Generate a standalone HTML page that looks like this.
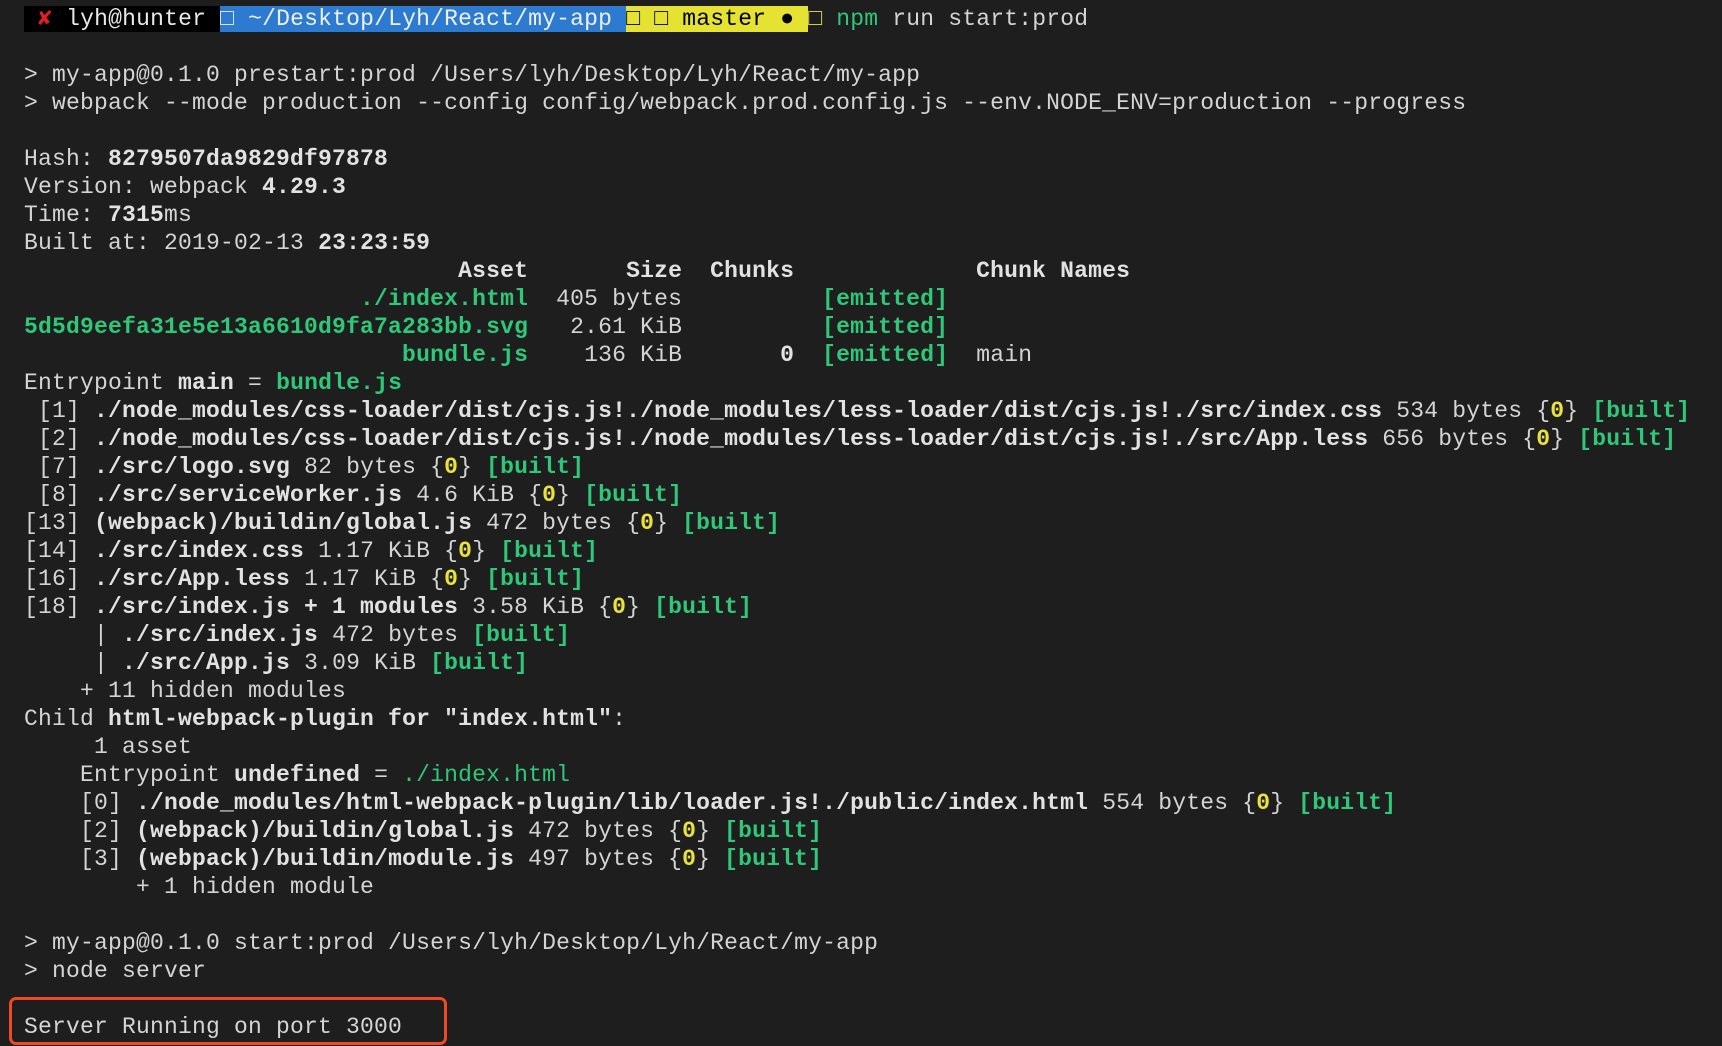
<!DOCTYPE html>
<html><head><meta charset="utf-8"><style>
html,body{margin:0;padding:0;background:#1e1e1e;width:1722px;height:1046px;overflow:hidden}
pre{margin:0;position:absolute;left:24px;top:5px;font-family:"Liberation Mono","DejaVu Sans Mono",monospace;font-size:23px;letter-spacing:0.2px;line-height:28px;color:#d4d4d4;white-space:pre}
b{font-weight:bold;color:#e2e2e2}
.g{color:#2fc878;font-weight:bold}
.gn{color:#2fc878}
.y{color:#e8e23a;font-weight:bold}
.pb{background:#000;color:#e8e8e8}
.bl{background:#2c7bd0;color:#f0f0f0}
.yl{background:#e6e232;color:#000}
.r{color:#e02020;font-weight:bold}
.box{position:absolute;left:9px;top:997px;width:432px;height:42px;border:3px solid #f04a23;border-radius:7px}
</style></head><body>
<pre><span class="pb"> <span class="r">✘</span> lyh@hunter </span><span class="bl">□ ~/Desktop/Lyh/React/my-app </span><span class="yl">□ □ master ● </span><span style="color:#e6e232">□</span> <span class="gn">npm</span> run start:prod

&gt; my-app@0.1.0 prestart:prod /Users/lyh/Desktop/Lyh/React/my-app
&gt; webpack --mode production --config config/webpack.prod.config.js --env.NODE_ENV=production --progress

Hash: <b>8279507da9829df97878</b>
Version: webpack <b>4.29.3</b>
Time: <b>7315</b>ms
Built at: 2019-02-13 <b>23:23:59</b>
<b>                               Asset       Size  Chunks             Chunk Names</b>
<span class="g">                        ./index.html</span>  405 bytes          <span class="g">[emitted]</span>
<span class="g">5d5d9eefa31e5e13a6610d9fa7a283bb.svg</span>   2.61 KiB          <span class="g">[emitted]</span>
<span class="g">                           bundle.js</span>    136 KiB       <b>0</b>  <span class="g">[emitted]</span>  main
Entrypoint <b>main</b> = <span class="g">bundle.js</span>
 [1] <b>./node_modules/css-loader/dist/cjs.js!./node_modules/less-loader/dist/cjs.js!./src/index.css</b> 534 bytes {<span class="y">0</span>} <span class="g">[built]</span>
 [2] <b>./node_modules/css-loader/dist/cjs.js!./node_modules/less-loader/dist/cjs.js!./src/App.less</b> 656 bytes {<span class="y">0</span>} <span class="g">[built]</span>
 [7] <b>./src/logo.svg</b> 82 bytes {<span class="y">0</span>} <span class="g">[built]</span>
 [8] <b>./src/serviceWorker.js</b> 4.6 KiB {<span class="y">0</span>} <span class="g">[built]</span>
[13] <b>(webpack)/buildin/global.js</b> 472 bytes {<span class="y">0</span>} <span class="g">[built]</span>
[14] <b>./src/index.css</b> 1.17 KiB {<span class="y">0</span>} <span class="g">[built]</span>
[16] <b>./src/App.less</b> 1.17 KiB {<span class="y">0</span>} <span class="g">[built]</span>
[18] <b>./src/index.js + 1 modules</b> 3.58 KiB {<span class="y">0</span>} <span class="g">[built]</span>
     | <b>./src/index.js</b> 472 bytes <span class="g">[built]</span>
     | <b>./src/App.js</b> 3.09 KiB <span class="g">[built]</span>
    + 11 hidden modules
Child <b>html-webpack-plugin for "index.html"</b>:
     1 asset
    Entrypoint <b>undefined</b> = <span class="gn">./index.html</span>
    [0] <b>./node_modules/html-webpack-plugin/lib/loader.js!./public/index.html</b> 554 bytes {<span class="y">0</span>} <span class="g">[built]</span>
    [2] <b>(webpack)/buildin/global.js</b> 472 bytes {<span class="y">0</span>} <span class="g">[built]</span>
    [3] <b>(webpack)/buildin/module.js</b> 497 bytes {<span class="y">0</span>} <span class="g">[built]</span>
        + 1 hidden module

&gt; my-app@0.1.0 start:prod /Users/lyh/Desktop/Lyh/React/my-app
&gt; node server

Server Running on port 3000</pre>
<div class="box"></div>
</body></html>
